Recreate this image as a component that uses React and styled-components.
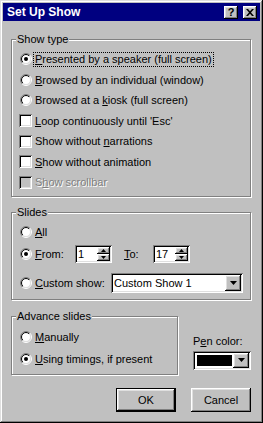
import React from "react";
import styled, { createGlobalStyle, css } from "styled-components";

const GlobalStyle = createGlobalStyle`
  html, body {
    margin: 0;
    padding: 0;
    background: #c0c0c0;
  }
  body {
    font-family: "Liberation Sans", Arial, sans-serif;
    font-size: 11px;
    color: #000;
  }
`;

const raised = css`
  background: #c0c0c0;
  box-shadow: inset -1px -1px #000, inset 1px 1px #fff, inset -2px -2px #808080,
    inset 2px 2px #dfdfdf;
`;

const sunken = css`
  background: #fff;
  box-shadow: inset 1px 1px #808080, inset -1px -1px #fff, inset 2px 2px #000,
    inset -2px -2px #dfdfdf;
`;

export default function App() {
  return (
    <>
      <GlobalStyle />
      <StyledWindow>
        <StyledTitleBar>
          <StyledTitle>Set Up Show</StyledTitle>
          <StyledCaptionButton>?</StyledCaptionButton>
          <StyledCaptionButton $gap={5}>
            <svg width="8" height="7" viewBox="0 0 8 7">
              <path d="M0 0h2l2 2.2L6 0h2L5 3.5 8 7H6L4 4.8 2 7H0l3-3.5z" fill="#000" />
            </svg>
          </StyledCaptionButton>
        </StyledTitleBar>

        <StyledBody>
          <StyledGroup $top={12} $pad="3px 0 3px 8px">
            <StyledLegend>Show type</StyledLegend>
            <StyledOption>
              <Radio checked />
              <StyledFocus>
                <Key>P</Key>resented by a speaker (full screen)
              </StyledFocus>
            </StyledOption>
            <StyledOption>
              <Radio />
              <span>
                <Key>B</Key>rowsed by an individual (window)
              </span>
            </StyledOption>
            <StyledOption>
              <Radio />
              <span>
                Browsed at a <Key>k</Key>iosk (full screen)
              </span>
            </StyledOption>
            <StyledOption>
              <Check />
              <span>
                <Key>L</Key>oop continuously until 'Esc'
              </span>
            </StyledOption>
            <StyledOption>
              <Check />
              <span>
                Show without <Key>n</Key>arrations
              </span>
            </StyledOption>
            <StyledOption>
              <Check />
              <span>
                <Key>S</Key>how without animation
              </span>
            </StyledOption>
            <StyledOption $disabled>
              <Check disabled />
              <span>
                S<Key>h</Key>ow scrollbar
              </span>
            </StyledOption>
          </StyledGroup>

          <StyledGroup $top={9} $pad="3px 0 6px 8px">
            <StyledLegend>Slides</StyledLegend>
            <StyledOption $h={20}>
              <Radio />
              <span>
                <Key>A</Key>ll
              </span>
            </StyledOption>
            <StyledOption $h={20} $mt={2}>
              <Radio checked />
              <StyledFieldLabel $w={37}>
                <Key>F</Key>rom:
              </StyledFieldLabel>
              <Spinner value="1" />
              <StyledFieldLabel $w={26} $ml={9}>
                <Key>T</Key>o:
              </StyledFieldLabel>
              <Spinner value="17" />
            </StyledOption>
            <StyledOption $h={20} $mt={9}>
              <Radio />
              <StyledFieldLabel $w={73}>
                <Key>C</Key>ustom show:
              </StyledFieldLabel>
              <StyledCombo $w={132} $h={20}>
                <StyledComboText>Custom Show 1</StyledComboText>
                <StyledComboButton>
                  <DownArrow />
                </StyledComboButton>
              </StyledCombo>
            </StyledOption>
          </StyledGroup>

          <StyledBottomRow>
            <StyledGroup $top={10} $pad="4px 0 5px 8px" $w={167}>
              <StyledLegend>Advance slides</StyledLegend>
              <StyledOption $h={20}>
                <Radio />
                <span>
                  <Key>M</Key>anually
                </span>
              </StyledOption>
              <StyledOption $h={20} $mt={2}>
                <Radio checked />
                <span>
                  <Key>U</Key>sing timings, if present
                </span>
              </StyledOption>
            </StyledGroup>

            <StyledPenColumn>
              <StyledPenLabel>
                P<Key>e</Key>n color:
              </StyledPenLabel>
              <StyledCombo $w={58} $h={19}>
                <StyledComboText>
                  <StyledSwatch />
                </StyledComboText>
                <StyledComboButton>
                  <DownArrow />
                </StyledComboButton>
              </StyledCombo>
            </StyledPenColumn>
          </StyledBottomRow>

          <StyledButtonRow>
            <StyledButton $default>OK</StyledButton>
            <StyledButton>Cancel</StyledButton>
          </StyledButtonRow>
        </StyledBody>
      </StyledWindow>
    </>
  );
}

function Radio({ checked }) {
  return (
    <StyledRadio width="12" height="12" viewBox="0 0 12 12">
      <defs>
        <linearGradient id="radioOuter" x1="0" y1="0" x2="1" y2="1">
          <stop offset="0.5" stopColor="#808080" />
          <stop offset="0.5" stopColor="#ffffff" />
        </linearGradient>
        <linearGradient id="radioInner" x1="0" y1="0" x2="1" y2="1">
          <stop offset="0.5" stopColor="#000000" />
          <stop offset="0.5" stopColor="#dfdfdf" />
        </linearGradient>
      </defs>
      <circle cx="6" cy="6" r="5.5" fill="none" stroke="url(#radioOuter)" />
      <circle cx="6" cy="6" r="4.5" fill="#fff" stroke="url(#radioInner)" />
      {checked && <circle cx="6" cy="6" r="2" fill="#000" />}
    </StyledRadio>
  );
}

function Check({ disabled }) {
  return <StyledCheck $disabled={disabled} />;
}

function Spinner({ value }) {
  return (
    <StyledSpinner>
      <StyledSpinValue>{value}</StyledSpinValue>
      <StyledSpinButtons>
        <StyledSpinButton>
          <svg width="5" height="3" viewBox="0 0 5 3">
            <path d="M2.5 0L5 3H0z" fill="#000" />
          </svg>
        </StyledSpinButton>
        <StyledSpinButton>
          <svg width="5" height="3" viewBox="0 0 5 3">
            <path d="M0 0h5L2.5 3z" fill="#000" />
          </svg>
        </StyledSpinButton>
      </StyledSpinButtons>
    </StyledSpinner>
  );
}

function DownArrow() {
  return (
    <svg width="7" height="4" viewBox="0 0 7 4">
      <path d="M0 0h7L3.5 4z" fill="#000" />
    </svg>
  );
}

const StyledWindow = styled.div`
  width: 263px;
  height: 423px;
  box-sizing: border-box;
  padding: 3px;
  background: #c0c0c0;
  box-shadow: inset -1px -1px #000, inset 1px 1px #dfdfdf,
    inset -2px -2px #808080, inset 2px 2px #fff;
  display: flex;
  flex-direction: column;
`;

const StyledTitleBar = styled.div`
  height: 18px;
  background: #000080;
  color: #fff;
  display: flex;
  align-items: center;
  padding: 0 3px 0 3px;
  font-size: 12px;
  font-weight: bold;
`;

const StyledTitle = styled.span`
  flex: 1;
  padding-left: 1px;
`;

const StyledCaptionButton = styled.span`
  ${raised};
  width: 14px;
  height: 13px;
  margin-left: ${(props) => props.$gap || 0}px;
  display: flex;
  align-items: center;
  justify-content: center;
  color: #000;
  font-size: 11px;
  font-weight: bold;
`;

const StyledBody = styled.div`
  display: flex;
  flex-direction: column;
  padding: 0 9px 0 8px;
`;

const StyledGroup = styled.fieldset`
  margin: ${(props) => props.$top}px 0 0;
  padding: ${(props) => props.$pad};
  width: ${(props) => (props.$w ? `${props.$w}px` : "auto")};
  box-sizing: border-box;
  min-width: 0;
  border: 1px solid #808080;
  box-shadow: inset 1px 1px #fff, 1px 1px #fff;
`;

const StyledLegend = styled.legend`
  margin-left: -4px;
  padding: 0 1px;
  line-height: 13px;
  background: #c0c0c0;
`;

const StyledOption = styled.div`
  display: flex;
  align-items: center;
  height: ${(props) => props.$h || 20.5}px;
  margin-top: ${(props) => props.$mt || 0}px;
  gap: 3px;
  white-space: nowrap;
  color: ${(props) => (props.$disabled ? "#808080" : "#000")};
  text-shadow: ${(props) => (props.$disabled ? "1px 1px #fff" : "none")};
`;

const StyledFocus = styled.span`
  outline: 1px dotted #000;
  padding: 0 1px;
  margin-left: -1px;
  line-height: 13px;
`;

const Key = styled.span`
  text-decoration: underline;
`;

const StyledRadio = styled.svg`
  flex: none;
  display: block;
`;

const StyledCheck = styled.span`
  flex: none;
  width: 13px;
  height: 13px;
  margin-left: -1px;
  box-sizing: border-box;
  ${sunken};
  background: ${(props) => (props.$disabled ? "#c0c0c0" : "#fff")};
`;

const StyledFieldLabel = styled.span`
  width: ${(props) => props.$w}px;
  margin-left: ${(props) => props.$ml || 0}px;
  flex: none;
`;

const StyledSpinner = styled.div`
  ${sunken};
  flex: none;
  display: flex;
  width: 37px;
  height: 18px;
  padding: 2px;
  box-sizing: border-box;
`;

const StyledSpinValue = styled.span`
  flex: 1;
  padding-left: 1px;
  line-height: 14px;
`;

const StyledSpinButtons = styled.div`
  display: flex;
  flex-direction: column;
  width: 13px;
`;

const StyledSpinButton = styled.span`
  ${raised};
  flex: 1;
  display: flex;
  align-items: center;
  justify-content: center;
`;

const StyledCombo = styled.div`
  ${sunken};
  flex: none;
  display: flex;
  width: ${(props) => props.$w}px;
  height: ${(props) => props.$h}px;
  padding: 2px;
  box-sizing: border-box;
`;

const StyledComboText = styled.span`
  flex: 1;
  display: flex;
  align-items: center;
  padding-left: 1px;
`;

const StyledComboButton = styled.span`
  ${raised};
  width: 16px;
  display: flex;
  align-items: center;
  justify-content: center;
`;

const StyledSwatch = styled.span`
  width: 35px;
  height: 11px;
  margin-left: 1px;
  background: #000;
`;

const StyledBottomRow = styled.div`
  display: flex;
  gap: 15px;
`;

const StyledPenColumn = styled.div`
  align-self: flex-end;
  margin-bottom: 5px;
  display: flex;
  flex-direction: column;
  gap: 3px;
`;

const StyledPenLabel = styled.span`
  line-height: 13px;
`;

const StyledButtonRow = styled.div`
  display: flex;
  justify-content: flex-end;
  gap: 15px;
  margin-top: 13px;
`;

const StyledButton = styled.button`
  ${raised};
  width: 60px;
  height: 24px;
  padding: 0;
  border: none;
  font-family: inherit;
  font-size: 11px;
  color: #000;
  box-shadow: ${(props) =>
    props.$default
      ? "inset 0 0 0 1px #000, inset -2px -2px #000, inset 2px 2px #fff, inset -3px -3px #808080, inset 3px 3px #dfdfdf"
      : "inset -1px -1px #000, inset 1px 1px #fff, inset -2px -2px #808080, inset 2px 2px #dfdfdf"};
`;
